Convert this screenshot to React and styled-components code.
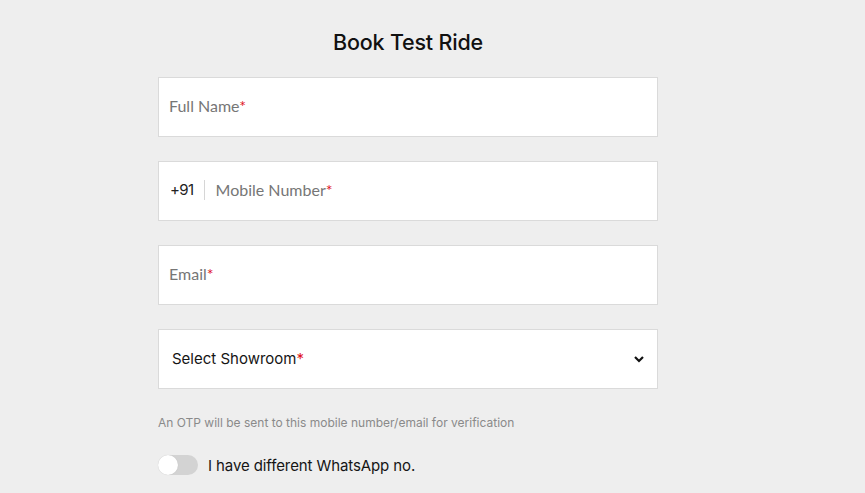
import React from 'react'
import styled, { createGlobalStyle } from 'styled-components'

const Global = createGlobalStyle`
  body {
    margin: 0;
    background: #eeeeee;
    font-family: Inter, "Noto Sans", sans-serif;
  }
`

const Page = styled.section`
  padding: 28px 0 0 158px;
  min-height: 493px;
  box-sizing: border-box;
`

const Form = styled.form`
  width: 500px;
  display: flex;
  flex-direction: column;
`

const Title = styled.h2`
  margin: 0 0 20px;
  text-align: center;
  font-size: 21.5px;
  font-weight: 500;
  color: #111;
  letter-spacing: -0.2px;
  line-height: 29px;
`

const Field = styled.div`
  height: 60px;
  box-sizing: border-box;
  background: #fff;
  border: 1px solid #dadada;
  display: flex;
  align-items: center;
  padding: ${p => (p.$select ? '0 12px 1px 13px' : '0 10px 3px')};
  margin-bottom: 24px;
`

const Placeholder = styled.span`
  font-family: Lato, sans-serif;
  font-size: 16px;
  color: #767676;
`

const Star = styled.span`
  color: #e0141e;
`

const Prefix = styled.span`
  font-size: 15px;
  color: #222;
  letter-spacing: -0.6px;
  padding: 0 10px 0 1px;
  border-right: 1px solid #d6d6d6;
  line-height: 20px;
  margin-right: 11px;
`

const SelectText = styled.span`
  flex: 1;
  font-size: 15px;
  color: #151515;
`

const Note = styled.p`
  margin: 2px 0 0;
  font-size: 12px;
  color: #8a8a8a;
`

const ToggleRow = styled.label`
  margin-top: 25px;
  display: flex;
  align-items: center;
  gap: 10px;
  font-size: 15px;
  color: #151515;
  letter-spacing: -0.1px;
`

const Track = styled.span`
  position: relative;
  width: 40px;
  height: 20px;
  border-radius: 10px;
  background: #d3d3d3;
`

const Knob = styled.span`
  position: absolute;
  left: 0;
  top: 0;
  width: 20px;
  height: 20px;
  border-radius: 50%;
  background: #fff;
  box-shadow: 0 0 1px rgba(0, 0, 0, 0.15);
`

const Chevron = () => (
  <svg width="12" height="12" viewBox="0 0 12 12">
    <path d="M2 4l4 4 4-4" fill="none" stroke="#111" strokeWidth="2.2" />
  </svg>
)

const App = () => {
  return (
    <>
      <Global />
      <Page>
        <Form>
          <Title>Book Test Ride</Title>
          <Field>
            <Placeholder>
              Full Name<Star>*</Star>
            </Placeholder>
          </Field>
          <Field>
            <Prefix>+91</Prefix>
            <Placeholder>
              Mobile Number<Star>*</Star>
            </Placeholder>
          </Field>
          <Field>
            <Placeholder>
              Email<Star>*</Star>
            </Placeholder>
          </Field>
          <Field $select>
            <SelectText>
              Select Showroom<Star>*</Star>
            </SelectText>
            <Chevron />
          </Field>
          <Note>An OTP will be sent to this mobile number/email for verification</Note>
          <ToggleRow>
            <Track>
              <Knob />
            </Track>
            I have different WhatsApp no.
          </ToggleRow>
        </Form>
      </Page>
    </>
  )
}

export default App
